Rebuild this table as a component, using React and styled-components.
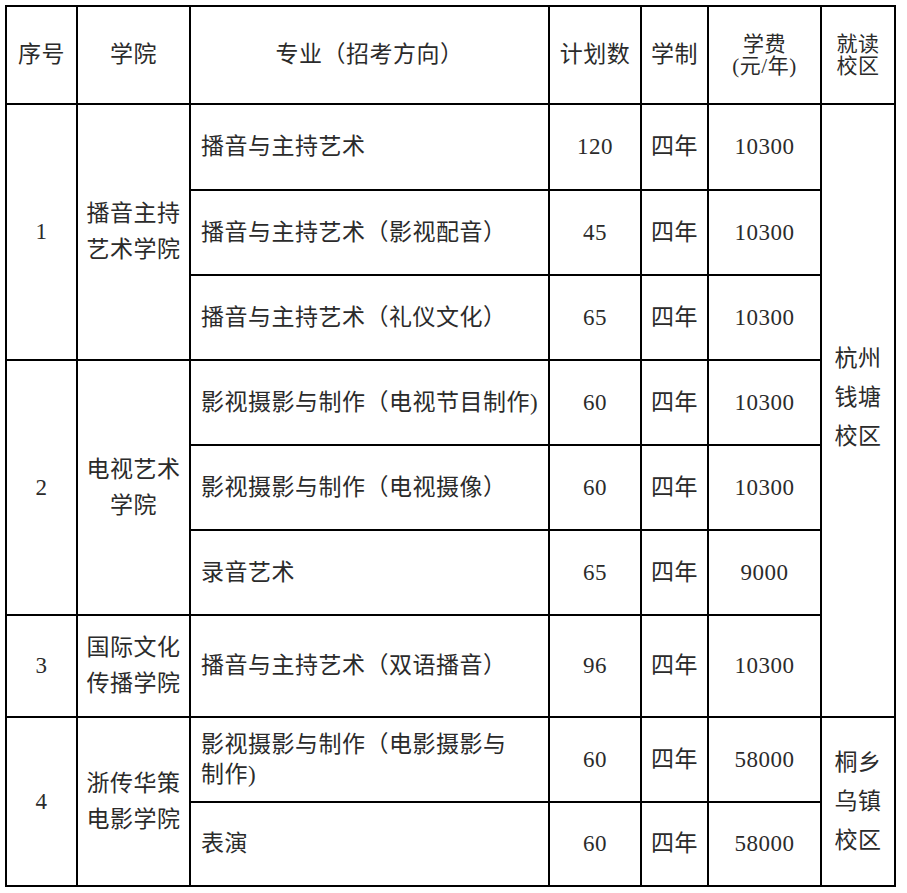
import React from "react";
import styled, { createGlobalStyle } from "styled-components";

const GlobalStyle = createGlobalStyle`
  body {
    margin: 0;
    background: #fff;
  }
`;

const Page = styled.div`
  padding: 5px 0 0 5px;
`;

const Table = styled.table`
  border-collapse: collapse;
  table-layout: fixed;
  width: 891px;
  font-family: "Liberation Serif", "Noto Sans CJK SC", serif;
  font-size: 23px;
  letter-spacing: 0.5px;
  color: #2b2b2b;
`;

const Row = styled.tr`
  height: ${props => props.$h}px;
`;

const HeadCell = styled.th`
  border: 2px solid #000;
  padding: 0;
  font-family: "Liberation Serif", "Noto Sans CJK SC", serif;
  font-weight: normal;
  font-size: ${props => (props.$tight ? "21px" : "23px")};
  text-align: center;
  vertical-align: middle;
  line-height: ${props => (props.$tight ? "22px" : "30px")};
`;

const Cell = styled.td`
  border: 2px solid #000;
  padding: ${props => (props.$left ? "0 2px 0 10px" : "0 2px")};
  font-family: "Liberation Serif", "Noto Sans CJK SC", serif;
  text-align: ${props => (props.$left ? "left" : "center")};
  vertical-align: middle;
  line-height: ${props => props.$lh || 36}px;
`;

const CampusCell = styled(Cell)`
  line-height: 39px;
  padding-bottom: ${props => props.$shift || 0}px;
`;

const colWidths = [71, 113, 359, 92, 67, 113, 74];

const groups = [
  {
    no: "1",
    college: ["播音主持", "艺术学院"],
    campus: { lines: ["杭州", "钱塘", "校区"], span: 7, shift: 26 },
    majors: [
      { name: ["播音与主持艺术"], plan: "120", fee: "10300", h: 86 },
      { name: ["播音与主持艺术（影视配音）"], plan: "45", fee: "10300", h: 85 },
      { name: ["播音与主持艺术（礼仪文化）"], plan: "65", fee: "10300", h: 85 },
    ],
  },
  {
    no: "2",
    college: ["电视艺术", "学院"],
    majors: [
      { name: ["影视摄影与制作（电视节目制作)"], plan: "60", fee: "10300", h: 85 },
      { name: ["影视摄影与制作（电视摄像）"], plan: "60", fee: "10300", h: 85 },
      { name: ["录音艺术"], plan: "65", fee: "9000", h: 85 },
    ],
  },
  {
    no: "3",
    college: ["国际文化", "传播学院"],
    majors: [
      { name: ["播音与主持艺术（双语播音）"], plan: "96", fee: "10300", h: 102 },
    ],
  },
  {
    no: "4",
    college: ["浙传华策", "电影学院"],
    campus: { lines: ["桐乡", "乌镇", "校区"], span: 2, shift: 0 },
    majors: [
      { name: ["影视摄影与制作（电影摄影与", "制作)"], plan: "60", fee: "58000", h: 85 },
      { name: ["表演"], plan: "60", fee: "58000", h: 84 },
    ],
  },
];

function Lines({ items }) {
  return items.map((line, i) => (
    <React.Fragment key={i}>
      {i > 0 && <br />}
      {line}
    </React.Fragment>
  ));
}

function App() {
  return (
    <>
      <GlobalStyle />
      <Page>
        <Table>
          <colgroup>
            {colWidths.map((w, i) => (
              <col key={i} style={{ width: w }} />
            ))}
          </colgroup>
          <thead>
            <Row $h={98}>
              <HeadCell>序号</HeadCell>
              <HeadCell>学院</HeadCell>
              <HeadCell>专业（招考方向）</HeadCell>
              <HeadCell>计划数</HeadCell>
              <HeadCell>学制</HeadCell>
              <HeadCell $tight>学费<br />(元/年)</HeadCell>
              <HeadCell $tight>就读<br />校区</HeadCell>
            </Row>
          </thead>
          <tbody>
            {groups.map(group =>
              group.majors.map((major, index) => (
                <Row key={group.no + index} $h={major.h}>
                  {index === 0 && (
                    <>
                      <Cell rowSpan={group.majors.length}>{group.no}</Cell>
                      <Cell rowSpan={group.majors.length}>
                        <Lines items={group.college} />
                      </Cell>
                    </>
                  )}
                  <Cell $left $lh={major.name.length > 1 ? 30 : 36}>
                    <Lines items={major.name} />
                  </Cell>
                  <Cell>{major.plan}</Cell>
                  <Cell>四年</Cell>
                  <Cell>{major.fee}</Cell>
                  {index === 0 && group.campus && (
                    <CampusCell rowSpan={group.campus.span} $shift={group.campus.shift}>
                      <Lines items={group.campus.lines} />
                    </CampusCell>
                  )}
                </Row>
              ))
            )}
          </tbody>
        </Table>
      </Page>
    </>
  );
}

export default App;
